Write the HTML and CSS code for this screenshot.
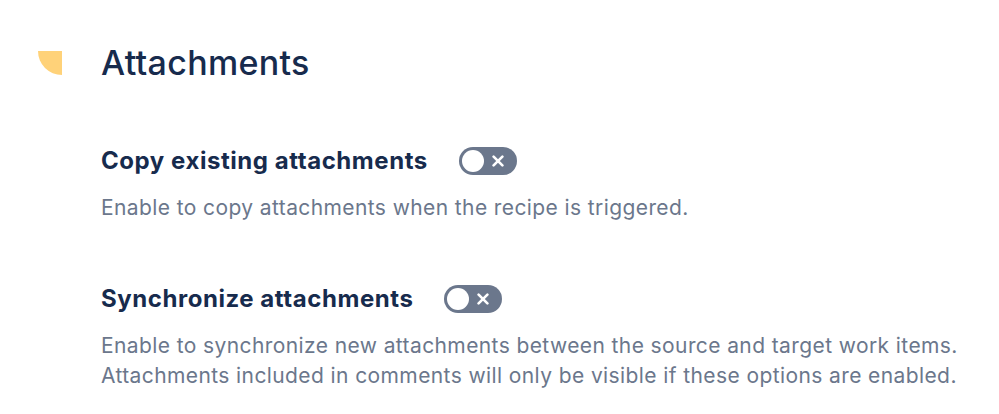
FILE: index.html
```html
<!DOCTYPE html>
<html>
<head>
<title>Attachments</title>
<meta charset="UTF-8">
<meta name="viewport" content="width=device-width, initial-scale=1.0">
<link rel="stylesheet" href="styles.css">
</head>
<body>

<div class="section">
  <div class="section-head">
    <div class="mark"></div>
    <h2 class="title">Attachments</h2>
  </div>

  <div class="option">
    <div class="option-head">
      <span class="label">Copy existing attachments</span>
      <button class="toggle" title="Off">
        <span class="knob"></span>
        <svg class="cross" width="12" height="12" viewBox="0 0 12 12"><path d="M1.6 1.6L10.4 10.4M10.4 1.6L1.6 10.4" stroke="#fff" stroke-width="2.6" stroke-linecap="round"/></svg>
      </button>
    </div>
    <p class="desc">Enable to copy attachments when the recipe is triggered.</p>
  </div>

  <div class="option">
    <div class="option-head">
      <span class="label">Synchronize attachments</span>
      <button class="toggle" title="Off">
        <span class="knob"></span>
        <svg class="cross" width="12" height="12" viewBox="0 0 12 12"><path d="M1.6 1.6L10.4 10.4M10.4 1.6L1.6 10.4" stroke="#fff" stroke-width="2.6" stroke-linecap="round"/></svg>
      </button>
    </div>
    <p class="desc">Enable to synchronize new attachments between the source and target work items.<br>Attachments included in comments will only be visible if these options are enabled.</p>
  </div>
</div>

</body>
</html>
```

FILE: styles.css
```css
* {
  box-sizing: border-box;
}
body {
  margin: 0;
  background: #fff;
  font-family: Inter, "Noto Sans", sans-serif;
  color: #172b4d;
}
.section {
  padding: 43px 0 0 38px;
}
.section-head {
  display: flex;
  align-items: center;
  gap: 39px;
}
.mark {
  width: 24px;
  height: 24px;
  background: #ffd279;
  border-bottom-left-radius: 100%;
}
.title {
  margin: 0;
  font-size: 34px;
  line-height: 40px;
  font-weight: 500;
  letter-spacing: 0.3px;
}
.option {
  padding-left: 63px;
  margin-top: 64px;
}
.option + .option {
  margin-top: 62px;
}
.option-head {
  display: flex;
  align-items: center;
  gap: 31px;
}
.label {
  font-size: 24px;
  font-weight: 700;
  line-height: 28px;
  letter-spacing: 0.55px;
}
.toggle {
  width: 58px;
  height: 28px;
  border: 0;
  border-radius: 14px;
  background: #6b778c;
  padding: 0 3px;
  display: flex;
  align-items: center;
  justify-content: space-between;
  cursor: pointer;
}
.knob {
  width: 22px;
  height: 22px;
  border-radius: 50%;
  background: #fff;
}
.cross {
  margin-right: 10px;
}
.desc {
  margin: 18px 0 0;
  font-size: 21px;
  line-height: 30px;
  letter-spacing: 0.4px;
  color: #6b778c;
}
```
